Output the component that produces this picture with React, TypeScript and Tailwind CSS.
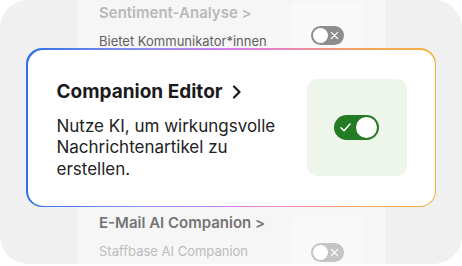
import React from 'react';

function OffToggle({ faded }: { faded?: boolean }) {
  return (
    <div className={`relative w-[33px] h-[19px] rounded-full ${faded ? 'bg-[#c4c4c4]' : 'bg-[#8d8d8d]'}`}>
      <div className="absolute left-[2px] top-[2px] w-[15px] h-[15px] rounded-full bg-white" />
      <svg className="absolute right-[5px] top-[5px] w-[9px] h-[9px]" viewBox="0 0 10 10" fill="none" stroke="white" strokeWidth={1.4} strokeLinecap="round">
        <path d="M1.5 1.5l7 7M8.5 1.5l-7 7" />
      </svg>
    </div>
  );
}

function BackItem({
  title,
  desc,
  titleClass,
  descClass,
  boxOffset,
  faded,
}: {
  title: string;
  desc: string;
  titleClass: string;
  descClass: string;
  boxOffset: string;
  faded?: boolean;
}) {
  return (
    <div className="flex justify-between items-start">
      <div className="w-[180px]">
        <p className={`text-[15px] leading-[20px] font-semibold whitespace-nowrap ${titleClass}`}>{title} &gt;</p>
        <p className={`mt-[7.5px] text-[13px] leading-[20px] ${descClass}`}>{desc}</p>
      </div>
      <div className={`${boxOffset} w-[73px] h-[73px] rounded-[8px] bg-[#f9f9f9] flex items-center justify-center`}>
        <OffToggle faded={faded} />
      </div>
    </div>
  );
}

export default function App() {
  return (
    <div className="w-[462px] h-[266px] bg-white" style={{ fontFamily: 'Inter, "Noto Sans", sans-serif' }}>
      <div className="relative w-[462px] h-[264px] rounded-[28px] bg-[#f0f0f0] overflow-hidden">
        {/* faded list behind */}
        <div className="ml-[78px] w-[307px] h-full bg-[#f6f6f6] px-[21px] pt-[3px] flex flex-col">
          <div className="h-[210px] shrink-0 overflow-hidden">
            <BackItem
              title="Sentiment-Analyse"
              desc="Bietet Kommunikator*innen Einblicke in die Stimmung"
              titleClass="text-[#b9b9b9]"
              descClass="text-[#5f5f5f]"
              boxOffset="-mt-[4px]"
            />
          </div>
          <BackItem
            title="E-Mail AI Companion"
            desc="Staffbase AI Companion generates and refines email"
            titleClass="text-[#747474]"
            descClass="text-[#bcbcbc]"
            boxOffset="mt-[3px]"
            faded
          />
        </div>

        {/* highlighted card */}
        <div className="absolute left-[26px] top-[48px] w-[410px] h-[159px] rounded-[16px] p-[1.5px] bg-[linear-gradient(90deg,#2f6fe6_0%,#7f8df0_25%,#d77ef0_50%,#ef86b4_65%,#f5a35a_82%,#f6b23a_100%)]">
          <div className="h-full rounded-[15px] bg-white flex items-center justify-between pl-[29px] pr-[28px]">
            <div className="mt-[5px]">
              <div className="flex items-center gap-[8px] text-[#1b1b1b]">
                <p className="text-[19px] leading-[24px] font-bold">Companion Editor</p>
                <svg className="w-[11px] h-[14px]" viewBox="0 0 11 14" fill="none" stroke="currentColor" strokeWidth={2.2} strokeLinecap="round" strokeLinejoin="round">
                  <path d="M3 1.5l5.5 5.5L3 12.5" />
                </svg>
              </div>
              <p className="mt-[12px] w-[230px] text-[17px] leading-[21.5px] text-[#222]">
                Nutze KI, um wirkungsvolle Nachrichtenartikel zu erstellen.
              </p>
            </div>
            <div className="w-[100px] h-[97px] rounded-[10px] bg-[#eef5ea] flex items-center justify-center">
              <div className="relative w-[45px] h-[25px] rounded-full bg-[#237c23]">
                <svg className="absolute left-[6px] top-[8px] w-[11px] h-[9px]" viewBox="0 0 11 9" fill="none" stroke="white" strokeWidth={1.5} strokeLinecap="round" strokeLinejoin="round">
                  <path d="M1 4.8l3 3L10 1" />
                </svg>
                <div className="absolute right-[2px] top-[2px] w-[21px] h-[21px] rounded-full bg-white" />
              </div>
            </div>
          </div>
        </div>
      </div>
    </div>
  );
}
